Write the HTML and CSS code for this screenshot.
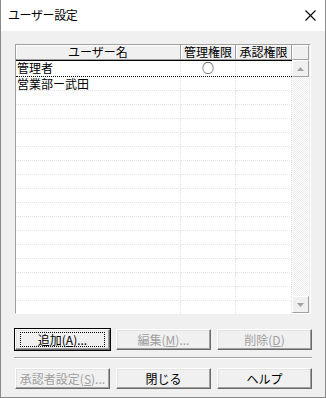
FILE: index.html
```html
<!DOCTYPE html>
<html lang="ja">
<head>
  <meta charset="UTF-8"/>
  <title>ユーザー設定</title>
  <link rel="stylesheet" href="styles.css">
</head>
<body>
  <div class="window">
    <!-- title bar -->
    <div class="titlebar">
      <span class="title">ユーザー設定</span>
      <svg class="close" width="11" height="11" viewBox="0 0 11 11">
        <path d="M0.5 0.5 L10.5 10.5 M10.5 0.5 L0.5 10.5" stroke="#000" stroke-width="1.1" fill="none"/>
      </svg>
    </div>

    <div class="content">
      <!-- user list -->
      <div class="listbox">
        <div class="table">
          <div class="row head">
            <div class="cell">ユーザー名</div>
            <div class="cell">管理権限</div>
            <div class="cell">承認権限</div>
          </div>
          <div class="row data focused">
            <div class="cell left">管理者</div>
            <div class="cell mark">○</div>
            <div class="cell"></div>
          </div>
          <div class="row data">
            <div class="cell left">営業部ー武田</div>
            <div class="cell"></div>
            <div class="cell"></div>
          </div>
          <div class="row empty"><div class="cell"></div><div class="cell"></div><div class="cell"></div></div>
          <div class="row empty"><div class="cell"></div><div class="cell"></div><div class="cell"></div></div>
          <div class="row empty"><div class="cell"></div><div class="cell"></div><div class="cell"></div></div>
          <div class="row empty"><div class="cell"></div><div class="cell"></div><div class="cell"></div></div>
          <div class="row empty"><div class="cell"></div><div class="cell"></div><div class="cell"></div></div>
          <div class="row empty"><div class="cell"></div><div class="cell"></div><div class="cell"></div></div>
          <div class="row empty"><div class="cell"></div><div class="cell"></div><div class="cell"></div></div>
          <div class="row empty"><div class="cell"></div><div class="cell"></div><div class="cell"></div></div>
          <div class="row empty"><div class="cell"></div><div class="cell"></div><div class="cell"></div></div>
          <div class="row empty"><div class="cell"></div><div class="cell"></div><div class="cell"></div></div>
          <div class="row empty"><div class="cell"></div><div class="cell"></div><div class="cell"></div></div>
          <div class="row empty"><div class="cell"></div><div class="cell"></div><div class="cell"></div></div>
          <div class="row empty"><div class="cell"></div><div class="cell"></div><div class="cell"></div></div>
          <div class="row empty"><div class="cell"></div><div class="cell"></div><div class="cell"></div></div>
          <div class="row empty"><div class="cell"></div><div class="cell"></div><div class="cell"></div></div>
          <div class="row empty last"><div class="cell"></div><div class="cell"></div><div class="cell"></div></div>
        </div>
        <div class="scrollbar">
          <div class="sb-corner"></div>
          <div class="sb-btn">
            <svg width="7" height="4" viewBox="0 0 7 4"><path d="M3.5 0 L7 4 L0 4 Z" fill="#a0a0a0"/></svg>
          </div>
          <div class="sb-track"></div>
          <div class="sb-btn">
            <svg width="7" height="4" viewBox="0 0 7 4"><path d="M0 0 L7 0 L3.5 4 Z" fill="#a0a0a0"/></svg>
          </div>
        </div>
      </div>

      <!-- list actions -->
      <div class="buttons first">
        <button class="btn default"><span class="focus">追加(<u>A</u>)...</span></button>
        <button class="btn" disabled>編集(<u>M</u>)...</button>
        <button class="btn" disabled>削除(<u>D</u>)</button>
      </div>

      <div class="separator"></div>

      <div class="buttons">
        <button class="btn" disabled>承認者設定(<u>S</u>)...</button>
        <button class="btn">閉じる</button>
        <button class="btn">ヘルプ</button>
      </div>
    </div>
  </div>
</body>
</html>
```

FILE: styles.css
```css
/* page reset */
html, body {
  margin: 0;
  padding: 0;
  background: #f0f0f0;
}

.window {
  box-sizing: border-box;
  width: 326px;
  height: 398px;
  display: flex;
  flex-direction: column;
  border: 1px solid #8a8a8a;
  border-top: none;
  font-family: "Noto Sans CJK JP", "Noto Sans", sans-serif;
  font-size: 12px;
  color: #000;
}

/* 1. title bar */
.titlebar {
  height: 31px;
  flex: none;
  background: #fff;
  display: flex;
  align-items: center;
  justify-content: space-between;
  padding: 0 9px 0 7px;
}
.title {
  font-size: 12px;
  letter-spacing: -0.4px;
  margin-top: -2px;
}
.close {
  margin-top: -1px;
}

/* 2. dialog body */
.content {
  flex: 1;
  background: #f0f0f0;
  padding: 13px 14px 0 14px;
  display: flex;
  flex-direction: column;
}

/* 3. list box */
.listbox {
  box-sizing: border-box;
  width: 296px;
  height: 270px;
  display: flex;
  border: 1px solid;
  border-color: #a0a0a0 #fff #fff #a0a0a0;
  background: #fff;
}
.table {
  flex: 1;
  display: flex;
  flex-direction: column;
}
.row {
  display: grid;
  grid-template-columns: 165px 55px 1fr;
  height: 14px;
  flex: none;
  line-height: 13px;
}
.cell {
  box-sizing: border-box;
  border-right: 1px dotted #e2e2e2;
  white-space: nowrap;
}
.row.head {
  height: 15px;
  background: #f0f0f0;
}
.row.head .cell {
  text-align: center;
  border-right: 1px solid #a0a0a0;
  border-bottom: 1px solid #a0a0a0;
  box-shadow: inset 1px 1px #fff;
  line-height: 14px;
}
.row.data .cell,
.row.empty .cell {
  border-bottom: 1px dotted #e2e2e2;
}
.row.empty.last .cell {
  border-bottom: none;
}
.row.data .left {
  padding-left: 1px;
}
.row.data .mark {
  text-align: center;
  font-size: 12px;
}
.row.focused {
  border-top: 1px solid #000;
  border-bottom: 1px dotted #000;
  height: 15px;
}
.row.focused .cell {
  border-bottom: none;
}

/* 4. scrollbar */
.scrollbar {
  width: 17px;
  flex: none;
  display: flex;
  flex-direction: column;
  border-right: 1px solid #f0f0f0;
}
.sb-corner {
  height: 15px;
  box-sizing: border-box;
  background: #f0f0f0;
  border: 1px solid;
  border-color: #fff #a0a0a0 #a0a0a0 #fff;
}
.sb-btn {
  height: 17px;
  box-sizing: border-box;
  background: #f0f0f0;
  border: 1px solid;
  border-color: #fff #a0a0a0 #a0a0a0 #fff;
  display: flex;
  align-items: center;
  justify-content: center;
}
.sb-track {
  flex: 1;
  background: repeating-conic-gradient(#ededed 0 25%, #fff 0 50%) 0 0 / 2px 2px;
}

/* 5. push buttons */
.buttons {
  width: 297px;
  display: flex;
  justify-content: space-between;
}
.buttons.first {
  margin-top: 15px;
}
.btn {
  box-sizing: border-box;
  width: 95px;
  height: 21px;
  padding: 0;
  background: #f0f0f0;
  font-family: inherit;
  font-size: 12px;
  line-height: 13px;
  color: #000;
  border: 1px solid;
  border-color: #fff #696969 #696969 #fff;
  box-shadow: inset -1px -1px #a0a0a0, inset 1px 1px #e3e3e3;
  display: flex;
  align-items: center;
  justify-content: center;
}
.btn:disabled {
  color: #a0a0a0;
}
.btn.default {
  outline: 1px solid #000;
  outline-offset: 0;
}
.btn .focus {
  box-sizing: border-box;
  width: 85px;
  height: 15px;
  border: 1px dotted #000;
  display: flex;
  align-items: center;
  justify-content: center;
}

.separator {
  width: 298px;
  margin: 7px 0 9px -1px;
  border-top: 1px solid #a0a0a0;
  border-bottom: 1px solid #fff;
}
```
